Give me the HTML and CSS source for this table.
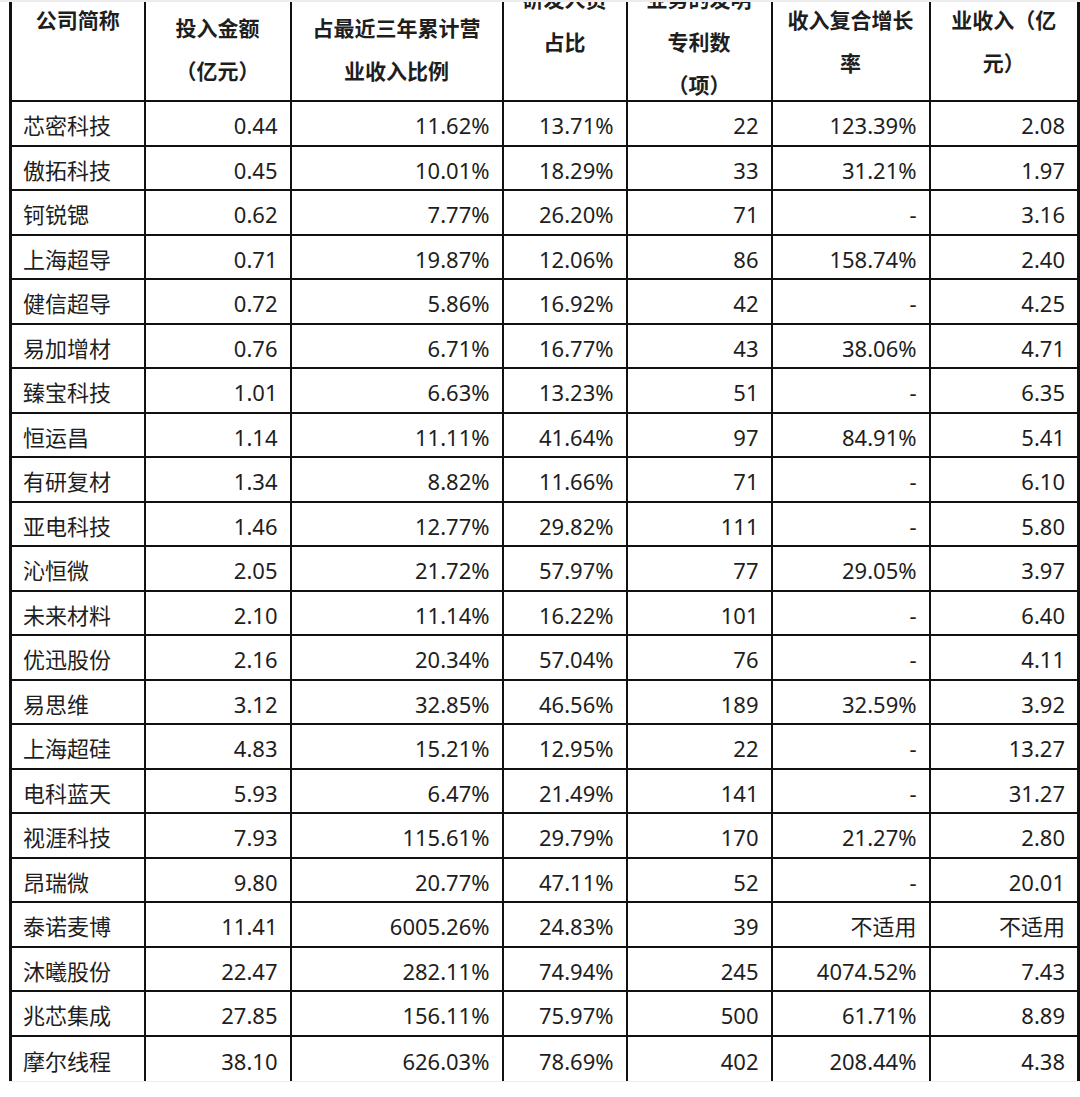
FILE: index.html
```html
<!DOCTYPE html>
<html lang="zh-CN">
<head>
<meta charset="utf-8">
<title>研发投入对比</title>
<link rel="stylesheet" href="styles.css">
</head>
<body>
<div class="page">
  <table class="grid">
    <colgroup>
      <col class="c1"><col class="c2"><col class="c3"><col class="c4"><col class="c5"><col class="c6"><col class="c7">
    </colgroup>
    <thead>
      <tr>
        <th><div class="hbox"><div class="hd hd-a">公司简称</div></div></th>
        <th><div class="hbox"><div class="hd hd-b">投入金额<br>（亿元）</div></div></th>
        <th><div class="hbox"><div class="hd hd-b">占最近三年累计营<br>业收入比例</div></div></th>
        <th><div class="hbox"><div class="hd hd-c">研发人员<br>占比</div></div></th>
        <th><div class="hbox"><div class="hd hd-c">业务的发明<br>专利数<br>（项）</div></div></th>
        <th><div class="hbox"><div class="hd hd-a">收入复合增长<br>率</div></div></th>
        <th><div class="hbox"><div class="hd hd-a">业收入（亿<br>元）</div></div></th>
      </tr>
    </thead>
    <tbody>
      <tr><td>芯密科技</td><td>0.44</td><td>11.62%</td><td>13.71%</td><td>22</td><td>123.39%</td><td>2.08</td></tr>
      <tr><td>傲拓科技</td><td>0.45</td><td>10.01%</td><td>18.29%</td><td>33</td><td>31.21%</td><td>1.97</td></tr>
      <tr><td>钶锐锶</td><td>0.62</td><td>7.77%</td><td>26.20%</td><td>71</td><td>-</td><td>3.16</td></tr>
      <tr><td>上海超导</td><td>0.71</td><td>19.87%</td><td>12.06%</td><td>86</td><td>158.74%</td><td>2.40</td></tr>
      <tr><td>健信超导</td><td>0.72</td><td>5.86%</td><td>16.92%</td><td>42</td><td>-</td><td>4.25</td></tr>
      <tr><td>易加增材</td><td>0.76</td><td>6.71%</td><td>16.77%</td><td>43</td><td>38.06%</td><td>4.71</td></tr>
      <tr><td>臻宝科技</td><td>1.01</td><td>6.63%</td><td>13.23%</td><td>51</td><td>-</td><td>6.35</td></tr>
      <tr><td>恒运昌</td><td>1.14</td><td>11.11%</td><td>41.64%</td><td>97</td><td>84.91%</td><td>5.41</td></tr>
      <tr><td>有研复材</td><td>1.34</td><td>8.82%</td><td>11.66%</td><td>71</td><td>-</td><td>6.10</td></tr>
      <tr><td>亚电科技</td><td>1.46</td><td>12.77%</td><td>29.82%</td><td>111</td><td>-</td><td>5.80</td></tr>
      <tr><td>沁恒微</td><td>2.05</td><td>21.72%</td><td>57.97%</td><td>77</td><td>29.05%</td><td>3.97</td></tr>
      <tr><td>未来材料</td><td>2.10</td><td>11.14%</td><td>16.22%</td><td>101</td><td>-</td><td>6.40</td></tr>
      <tr><td>优迅股份</td><td>2.16</td><td>20.34%</td><td>57.04%</td><td>76</td><td>-</td><td>4.11</td></tr>
      <tr><td>易思维</td><td>3.12</td><td>32.85%</td><td>46.56%</td><td>189</td><td>32.59%</td><td>3.92</td></tr>
      <tr><td>上海超硅</td><td>4.83</td><td>15.21%</td><td>12.95%</td><td>22</td><td>-</td><td>13.27</td></tr>
      <tr><td>电科蓝天</td><td>5.93</td><td>6.47%</td><td>21.49%</td><td>141</td><td>-</td><td>31.27</td></tr>
      <tr><td>视涯科技</td><td>7.93</td><td>115.61%</td><td>29.79%</td><td>170</td><td>21.27%</td><td>2.80</td></tr>
      <tr><td>昂瑞微</td><td>9.80</td><td>20.77%</td><td>47.11%</td><td>52</td><td>-</td><td>20.01</td></tr>
      <tr><td>泰诺麦博</td><td>11.41</td><td>6005.26%</td><td>24.83%</td><td>39</td><td>不适用</td><td>不适用</td></tr>
      <tr><td>沐曦股份</td><td>22.47</td><td>282.11%</td><td>74.94%</td><td>245</td><td>4074.52%</td><td>7.43</td></tr>
      <tr><td>兆芯集成</td><td>27.85</td><td>156.11%</td><td>75.97%</td><td>500</td><td>61.71%</td><td>8.89</td></tr>
      <tr class="last"><td>摩尔线程</td><td>38.10</td><td>626.03%</td><td>78.69%</td><td>402</td><td>208.44%</td><td>4.38</td></tr>
    </tbody>
  </table>
  <div class="edge"></div>
</div>
</body>
</html>
```

FILE: styles.css
```css
html, body {
  margin: 0;
  padding: 0;
  background: #ffffff;
}

body {
  font-family: "Noto Sans", "Noto Sans CJK SC", sans-serif;
  color: #1e1e1e;
  overflow: hidden;
}

.page {
  position: relative;
  width: 1080px;
  height: 1097px;
  overflow: hidden;
  border-top: 2px solid #ececec;
  box-sizing: border-box;
  padding-left: 9px;
}

.grid {
  border-collapse: collapse;
  table-layout: fixed;
  width: 1068px;
  margin-top: -2px;
}

.c1 { width: 134px; }
.c2 { width: 146px; }
.c3 { width: 212px; }
.c4 { width: 124px; }
.c5 { width: 145px; }
.c6 { width: 158px; }
.c7 { width: 149px; }

.grid th,
.grid td {
  border-left: 2px solid #111;
  border-right: 2px solid #111;
  padding: 0;
}

.grid tr > :first-child { border-left: 3px solid #111; }
.grid tr > :last-child { border-right: 3px solid #111; }

.grid th {
  vertical-align: top;
  border-bottom: 2px solid #111;
  font-weight: 700;
  font-size: 21px;
  text-align: center;
}

.hbox {
  height: 100px;
  overflow: hidden;
}

.hd {
  line-height: 43px;
}

.hd-a { margin-top: -1px; }
.hd-b { margin-top: 7px; }
.hd-c { margin-top: -22px; }

.grid td {
  height: 38.5px;
  font-size: 22px;
  line-height: 28px;
  text-align: right;
  padding: 4px 12px 0 12px;
  border-bottom: 2px solid #111;
  vertical-align: middle;
  white-space: nowrap;
}

.grid td:first-child {
  text-align: left;
  padding-left: 11px;
}

.grid tr.last td {
  border-bottom: none;
  height: 40.5px;
}

.edge {
  height: 1px;
  background: #ececec;
}
```
